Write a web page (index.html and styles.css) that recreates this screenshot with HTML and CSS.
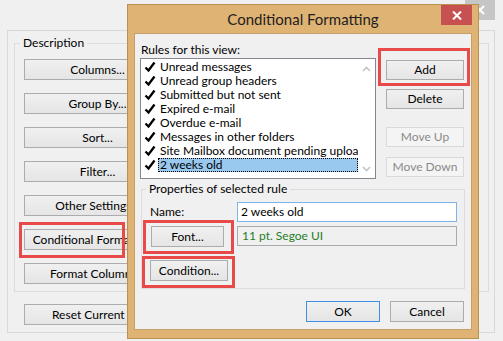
FILE: index.html
```html
<!DOCTYPE html>
<html>
<head>
<meta charset="utf-8">
<link rel="stylesheet" href="styles.css">
</head>
<body>
<div class="screen">
  <div class="bg-titlebar"><span class="bg-close"><svg width="10" height="10" viewBox="0 0 10 10"><path d="M1 1L9 9M9 1L1 9" stroke="#fff" stroke-width="2"/></svg></span></div>
  <div class="bg-panel">
    <fieldset class="desc">
      <legend>Description</legend>
      <div class="bg-buttons">
        <button class="btn bg-btn">Columns...</button>
        <button class="btn bg-btn">Group By...</button>
        <button class="btn bg-btn">Sort...</button>
        <button class="btn bg-btn">Filter...</button>
        <button class="btn bg-btn">Other Settings...</button>
        <button class="btn bg-btn hl hl-cf">Conditional Formatting...</button>
        <button class="btn bg-btn">Format Columns...</button>
      </div>
    </fieldset>
    <button class="btn reset">Reset Current View</button>
  </div>

  <div class="dialog">
    <div class="dlg-title">
      <h1>Conditional Formatting</h1>
      <span class="dlg-close"><svg width="10" height="9" viewBox="0 0 10 9"><path d="M1 0.5L9 8.5M9 0.5L1 8.5" stroke="#fff" stroke-width="2"/></svg></span>
    </div>
    <div class="dlg-body">
      <div class="top-row">
        <div class="rules">
          <div class="rules-label">Rules for this view:</div>
          <div class="list">
            <div class="items">
              <div class="item"><svg class="check" viewBox="0 0 12 12"><path d="M1.5 6.5L4.5 9.5L10.5 1.5" fill="none" stroke="#000" stroke-width="2.3"/></svg><span>Unread messages</span></div>
              <div class="item"><svg class="check" viewBox="0 0 12 12"><path d="M1.5 6.5L4.5 9.5L10.5 1.5" fill="none" stroke="#000" stroke-width="2.3"/></svg><span>Unread group headers</span></div>
              <div class="item"><svg class="check" viewBox="0 0 12 12"><path d="M1.5 6.5L4.5 9.5L10.5 1.5" fill="none" stroke="#000" stroke-width="2.3"/></svg><span>Submitted but not sent</span></div>
              <div class="item"><svg class="check" viewBox="0 0 12 12"><path d="M1.5 6.5L4.5 9.5L10.5 1.5" fill="none" stroke="#000" stroke-width="2.3"/></svg><span>Expired e-mail</span></div>
              <div class="item"><svg class="check" viewBox="0 0 12 12"><path d="M1.5 6.5L4.5 9.5L10.5 1.5" fill="none" stroke="#000" stroke-width="2.3"/></svg><span>Overdue e-mail</span></div>
              <div class="item"><svg class="check" viewBox="0 0 12 12"><path d="M1.5 6.5L4.5 9.5L10.5 1.5" fill="none" stroke="#000" stroke-width="2.3"/></svg><span>Messages in other folders</span></div>
              <div class="item"><svg class="check" viewBox="0 0 12 12"><path d="M1.5 6.5L4.5 9.5L10.5 1.5" fill="none" stroke="#000" stroke-width="2.3"/></svg><span>Site Mailbox document pending upload</span></div>
              <div class="item sel"><svg class="check" viewBox="0 0 12 12"><path d="M1.5 6.5L4.5 9.5L10.5 1.5" fill="none" stroke="#000" stroke-width="2.3"/></svg><span>2 weeks old</span></div>
            </div>
            <div class="scroll">
              <svg width="9" height="6" viewBox="0 0 9 6"><path d="M1 5L4.5 1.5L8 5" fill="none" stroke="#c4c4c4" stroke-width="1.6"/></svg>
              <svg width="9" height="6" viewBox="0 0 9 6"><path d="M1 1L4.5 4.5L8 1" fill="none" stroke="#c4c4c4" stroke-width="1.6"/></svg>
            </div>
          </div>
        </div>
        <div class="side">
          <button class="btn add hl hl-add">Add</button>
          <button class="btn delete">Delete</button>
          <button class="btn dis moveup">Move Up</button>
          <button class="btn dis movedown">Move Down</button>
        </div>
      </div>

      <fieldset class="props">
        <legend>Properties of selected rule</legend>
        <div class="name-row">
          <label class="name-label">Name:</label>
          <div class="name-input">2 weeks old</div>
        </div>
        <div class="font-row">
          <div class="font-cell"><button class="btn font-btn hl hl-font">Font...</button></div>
          <div class="font-box">11 pt. Segoe UI</div>
        </div>
        <div class="cond-row">
          <button class="btn cond-btn hl hl-cond">Condition...</button>
        </div>
      </fieldset>

      <div class="dlg-buttons">
        <button class="btn ok">OK</button>
        <button class="btn cancel">Cancel</button>
      </div>
    </div>
  </div>
</div>
</body>
</html>
```
FILE: styles.css
```css
*, *::before, *::after { box-sizing: border-box; }
html, body { margin: 0; padding: 0; }
body {
  width: 503px;
  height: 341px;
  overflow: hidden;
  background: #f0f0f0;
  font-family: Lato, "Noto Sans", sans-serif;
  font-size: 12px;
  line-height: 16px;
  color: #000;
}
.screen { position: relative; width: 503px; height: 341px; }

/* background window */
.bg-titlebar {
  height: 30px;
  display: flex;
  justify-content: flex-end;
  padding-right: 8px;
}
.bg-close {
  width: 30px;
  height: 20px;
  background: #c6c6c6;
  display: flex;
  align-items: center;
  justify-content: center;
}
.bg-panel {
  margin-left: 7px;
  width: 488px;
  height: 303px;
  border: 1px solid #d9d9d9;
  padding-top: 4px;
}
fieldset { min-width: 0; }
legend { padding: 0 3px; margin-left: -4px; line-height: 16px; }
.desc {
  margin: 0 0 0 6px;
  width: 475px;
  height: 257px;
  border: 1px solid #dcdcdc;
  padding: 8px 0 0 9px;
}
.bg-buttons { display: flex; flex-direction: column; gap: 13px; }

.btn {
  font: inherit;
  color: #000;
  height: 21px;
  border: 1px solid #acacac;
  background: linear-gradient(#f0f0f0, #e5e5e5);
  padding: 0;
  margin: 0;
  display: flex;
  align-items: center;
  justify-content: center;
  white-space: nowrap;
  border-radius: 0;
}
.bg-btn { width: 147px; }
.reset { margin: 12px 0 0 16px; width: 158px; }

/* highlight annotations */
.hl { position: relative; overflow: visible; }
.hl::after {
  content: "";
  position: absolute;
  border: 3px solid #e84a4a;
  pointer-events: none;
}
.hl-cf::after { left: -6px; top: -8px; width: 106px; height: 36px; }
.hl-add::after { left: -9px; top: -13px; width: 92px; height: 38px; }
.hl-font::after { left: -9px; top: -7px; width: 91px; height: 34px; }
.hl-cond::after { left: -9px; top: -5px; width: 93px; height: 32px; }

/* dialog */
.dialog {
  position: absolute;
  left: 127px;
  top: 4px;
  width: 352px;
  height: 335px;
  background: #deb374;
  border: 1px solid #b99150;
}
.dlg-title {
  height: 28px;
  display: grid;
  grid-template-columns: 1fr auto 1fr;
}
.dlg-title h1 {
  grid-column: 2;
  margin: 0;
  font-weight: normal;
  font-size: 15px;
  line-height: 28px;
  color: #1e1e1e;
}
.dlg-close {
  grid-column: 3;
  justify-self: end;
  margin-right: 6px;
  width: 31px;
  height: 20px;
  background: #c75050;
  display: flex;
  align-items: center;
  justify-content: center;
}
.dlg-body {
  margin: 0 6px;
  height: 297px;
  background: #f0f0f0;
  border: 1px solid #c4a068;
  padding: 8px 7px 0 5px;
}
.top-row { display: flex; }
.rules { width: 236px; }
.rules-label { padding-left: 1px; height: 16px; }
.list {
  height: 121px;
  border: 1px solid #828790;
  background: #fff;
  display: flex;
}
.items { flex: 1; min-width: 0; padding-top: 1px; }
.item { height: 14px; display: flex; align-items: center; }
.check { width: 12px; height: 12px; margin: 0 2px 0 3px; flex: none; }
.item span {
  flex: 1;
  min-width: 0;
  padding-left: 2px;
  line-height: 14px;
  height: 14px;
  white-space: nowrap;
  overflow: hidden;
}
.item.sel span {
  background: #99c9ef;
  outline: 1px dotted #000;
  outline-offset: -1px;
}
.scroll {
  width: 17px;
  flex: none;
  display: flex;
  flex-direction: column;
  justify-content: space-between;
  align-items: center;
  padding: 7px 0 6px;
}

.side { margin-left: 10px; width: 78px; display: flex; flex-direction: column; }
.side .btn { width: 78px; height: 20px; }
.add { margin-top: 18px; }
.delete { margin-top: 9px; }
.moveup { margin-top: 18px; }
.movedown { margin-top: 10px; }
.btn.dis {
  border-color: #d9d9d9;
  background: #f4f4f4;
  color: #8a8a8a;
}

.props {
  margin: 2px 0 0 1px;
  width: 324px;
  height: 108px;
  border: 1px solid #dcdcdc;
  padding: 5px 0 0 8px;
}
.props legend { margin-left: -4px; }
.name-row { display: flex; align-items: center; height: 20px; }
.name-label { width: 87px; }
.name-input {
  width: 220px;
  height: 20px;
  border: 1px solid #7eb4ea;
  background: #fff;
  padding-left: 3px;
  line-height: 18px;
}
.font-row { display: flex; margin-top: 4px; }
.font-cell { width: 87px; }
.font-btn { margin-left: 1px; width: 73px; }
.font-box {
  width: 220px;
  height: 20px;
  border: 1px solid #ababab;
  padding-left: 4px;
  line-height: 18px;
  color: #267d26;
}
.cond-row { margin-top: 13px; }
.cond-btn { width: 78px; }

.dlg-buttons {
  display: flex;
  justify-content: flex-end;
  gap: 10px;
  margin-top: 12px;
}
.dlg-buttons .btn { width: 74px; }
.ok { border-color: #3d8ee6; }
```
